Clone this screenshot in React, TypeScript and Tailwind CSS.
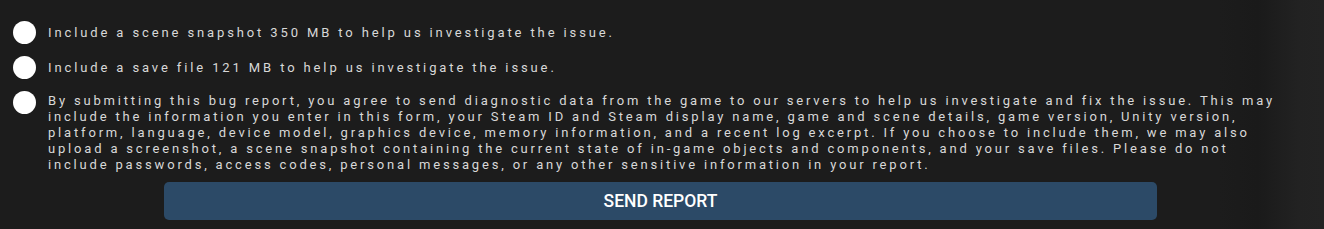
import { ReactNode } from "react";

function Radio({ children, className = "" }: { children: ReactNode; className?: string }) {
  return (
    <div className={`flex flex-row items-start gap-[12px] ${className}`}>
      <span className="mt-[-1px] h-[23px] w-[23px] shrink-0 rounded-full bg-white" />
      {children}
    </div>
  );
}

export default function App() {
  return (
    <div className="h-[229px] w-[1324px] overflow-hidden bg-[linear-gradient(to_right,#1c1c1c_92%,#1a1a1a_95%,#222222_98%,#232323_100%)] font-['Roboto',sans-serif] text-[#d8d8d8]">
      <div className="flex flex-col pl-[13px] pt-[22px]">
        <Radio>
          <p className="text-[13px] leading-[22px] tracking-[2.88px]">
            Include a scene snapshot 350 MB to help us investigate the issue.
          </p>
        </Radio>
        <Radio className="mt-[13px]">
          <p className="text-[13px] leading-[22px] tracking-[2.88px]">
            Include a save file 121 MB to help us investigate the issue.
          </p>
        </Radio>
        <Radio className="mt-[13px]">
          <p className="mt-[1px] whitespace-nowrap text-[13px] leading-[16px] tracking-[2.82px]">
            By submitting this bug report, you agree to send diagnostic data from the game to our servers to help us investigate and fix the issue. This may
            <br />
            include the information you enter in this form, your Steam ID and Steam display name, game and scene details, game version, Unity version,
            <br />
            platform, language, device model, graphics device, memory information, and a recent log excerpt. If you choose to include them, we may also
            <br />
            upload a screenshot, a scene snapshot containing the current state of in-game objects and components, and your save files. Please do not
            <br />
            include passwords, access codes, personal messages, or any other sensitive information in your report.
          </p>
        </Radio>
      </div>
      <div className="mt-[9px] pl-[164px]">
        <button className="flex h-[38px] w-[993px] items-center justify-center rounded-[5px] bg-[#2c4a67] text-[17.5px] font-medium text-white">
          SEND REPORT
        </button>
      </div>
    </div>
  );
}
